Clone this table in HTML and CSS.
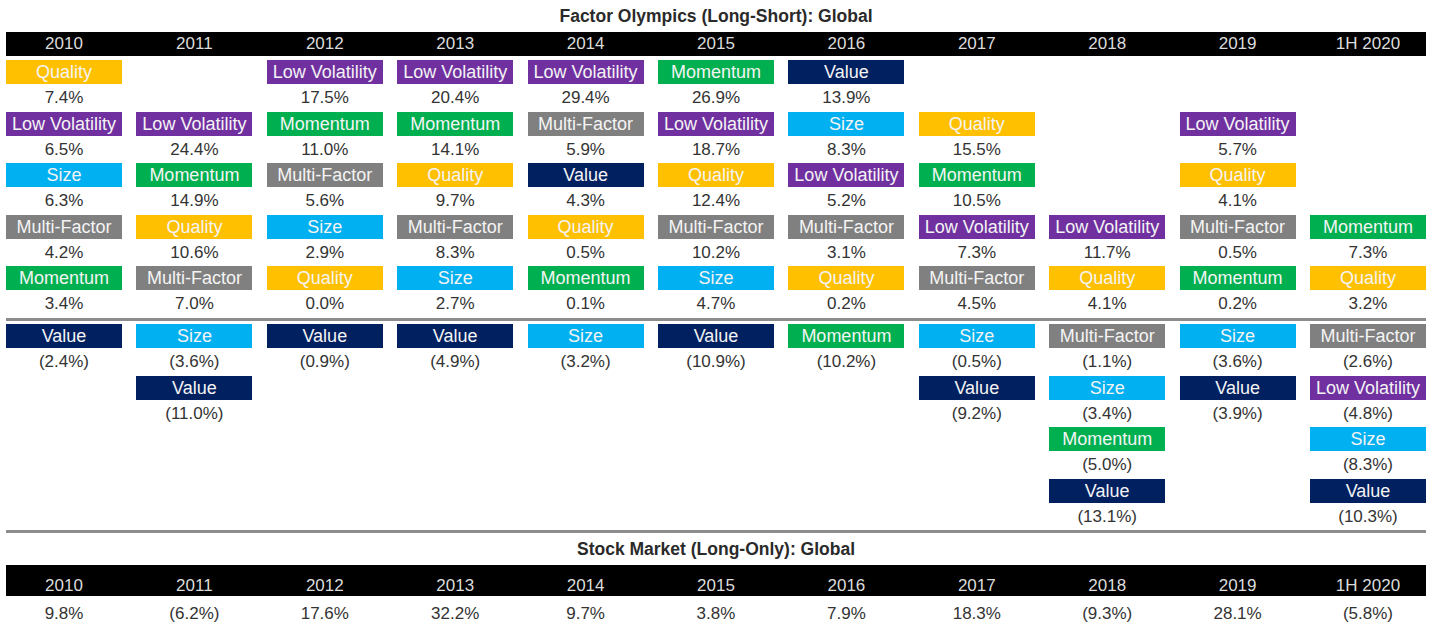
FILE: index.html
```html
<!DOCTYPE html>
<html lang="en">
<head>
<meta charset="utf-8">
<title>Factor Olympics</title>
<link rel="stylesheet" href="styles.css">
</head>
<body>
<div class="page">
  <h1 class="title">Factor Olympics (Long-Short): Global</h1>
  <div class="grid yearbar">
    <div>2010</div><div>2011</div><div>2012</div><div>2013</div><div>2014</div><div>2015</div><div>2016</div><div>2017</div><div>2018</div><div>2019</div><div>1H 2020</div>
  </div>

  <div class="grid pos">
    <div class="col">
      <div class="lbl q">Quality</div><div class="pct">7.4%</div>
      <div class="lbl lv">Low Volatility</div><div class="pct">6.5%</div>
      <div class="lbl sz">Size</div><div class="pct">6.3%</div>
      <div class="lbl mf">Multi-Factor</div><div class="pct">4.2%</div>
      <div class="lbl mo">Momentum</div><div class="pct">3.4%</div>
    </div>
    <div class="col">
      <div class="lbl lv">Low Volatility</div><div class="pct">24.4%</div>
      <div class="lbl mo">Momentum</div><div class="pct">14.9%</div>
      <div class="lbl q">Quality</div><div class="pct">10.6%</div>
      <div class="lbl mf">Multi-Factor</div><div class="pct">7.0%</div>
    </div>
    <div class="col">
      <div class="lbl lv">Low Volatility</div><div class="pct">17.5%</div>
      <div class="lbl mo">Momentum</div><div class="pct">11.0%</div>
      <div class="lbl mf">Multi-Factor</div><div class="pct">5.6%</div>
      <div class="lbl sz">Size</div><div class="pct">2.9%</div>
      <div class="lbl q">Quality</div><div class="pct">0.0%</div>
    </div>
    <div class="col">
      <div class="lbl lv">Low Volatility</div><div class="pct">20.4%</div>
      <div class="lbl mo">Momentum</div><div class="pct">14.1%</div>
      <div class="lbl q">Quality</div><div class="pct">9.7%</div>
      <div class="lbl mf">Multi-Factor</div><div class="pct">8.3%</div>
      <div class="lbl sz">Size</div><div class="pct">2.7%</div>
    </div>
    <div class="col">
      <div class="lbl lv">Low Volatility</div><div class="pct">29.4%</div>
      <div class="lbl mf">Multi-Factor</div><div class="pct">5.9%</div>
      <div class="lbl va">Value</div><div class="pct">4.3%</div>
      <div class="lbl q">Quality</div><div class="pct">0.5%</div>
      <div class="lbl mo">Momentum</div><div class="pct">0.1%</div>
    </div>
    <div class="col">
      <div class="lbl mo">Momentum</div><div class="pct">26.9%</div>
      <div class="lbl lv">Low Volatility</div><div class="pct">18.7%</div>
      <div class="lbl q">Quality</div><div class="pct">12.4%</div>
      <div class="lbl mf">Multi-Factor</div><div class="pct">10.2%</div>
      <div class="lbl sz">Size</div><div class="pct">4.7%</div>
    </div>
    <div class="col">
      <div class="lbl va">Value</div><div class="pct">13.9%</div>
      <div class="lbl sz">Size</div><div class="pct">8.3%</div>
      <div class="lbl lv">Low Volatility</div><div class="pct">5.2%</div>
      <div class="lbl mf">Multi-Factor</div><div class="pct">3.1%</div>
      <div class="lbl q">Quality</div><div class="pct">0.2%</div>
    </div>
    <div class="col">
      <div class="lbl q">Quality</div><div class="pct">15.5%</div>
      <div class="lbl mo">Momentum</div><div class="pct">10.5%</div>
      <div class="lbl lv">Low Volatility</div><div class="pct">7.3%</div>
      <div class="lbl mf">Multi-Factor</div><div class="pct">4.5%</div>
    </div>
    <div class="col">
      <div class="lbl lv">Low Volatility</div><div class="pct">11.7%</div>
      <div class="lbl q">Quality</div><div class="pct">4.1%</div>
    </div>
    <div class="col">
      <div class="lbl lv">Low Volatility</div><div class="pct">5.7%</div>
      <div class="lbl q">Quality</div><div class="pct">4.1%</div>
      <div class="lbl mf">Multi-Factor</div><div class="pct">0.5%</div>
      <div class="lbl mo">Momentum</div><div class="pct">0.2%</div>
    </div>
    <div class="col">
      <div class="lbl mo">Momentum</div><div class="pct">7.3%</div>
      <div class="lbl q">Quality</div><div class="pct">3.2%</div>
    </div>
  </div>

  <div class="rule"></div>

  <div class="grid neg">
    <div class="col">
      <div class="lbl va">Value</div><div class="pct">(2.4%)</div>
    </div>
    <div class="col">
      <div class="lbl sz">Size</div><div class="pct">(3.6%)</div>
      <div class="lbl va">Value</div><div class="pct">(11.0%)</div>
    </div>
    <div class="col">
      <div class="lbl va">Value</div><div class="pct">(0.9%)</div>
    </div>
    <div class="col">
      <div class="lbl va">Value</div><div class="pct">(4.9%)</div>
    </div>
    <div class="col">
      <div class="lbl sz">Size</div><div class="pct">(3.2%)</div>
    </div>
    <div class="col">
      <div class="lbl va">Value</div><div class="pct">(10.9%)</div>
    </div>
    <div class="col">
      <div class="lbl mo">Momentum</div><div class="pct">(10.2%)</div>
    </div>
    <div class="col">
      <div class="lbl sz">Size</div><div class="pct">(0.5%)</div>
      <div class="lbl va">Value</div><div class="pct">(9.2%)</div>
    </div>
    <div class="col">
      <div class="lbl mf">Multi-Factor</div><div class="pct">(1.1%)</div>
      <div class="lbl sz">Size</div><div class="pct">(3.4%)</div>
      <div class="lbl mo">Momentum</div><div class="pct">(5.0%)</div>
      <div class="lbl va">Value</div><div class="pct">(13.1%)</div>
    </div>
    <div class="col">
      <div class="lbl sz">Size</div><div class="pct">(3.6%)</div>
      <div class="lbl va">Value</div><div class="pct">(3.9%)</div>
    </div>
    <div class="col">
      <div class="lbl mf">Multi-Factor</div><div class="pct">(2.6%)</div>
      <div class="lbl lv">Low Volatility</div><div class="pct">(4.8%)</div>
      <div class="lbl sz">Size</div><div class="pct">(8.3%)</div>
      <div class="lbl va">Value</div><div class="pct">(10.3%)</div>
    </div>
  </div>

  <div class="rule"></div>

  <h2 class="title">Stock Market (Long-Only): Global</h2>
  <div class="grid yearbar tall">
    <div>2010</div><div>2011</div><div>2012</div><div>2013</div><div>2014</div><div>2015</div><div>2016</div><div>2017</div><div>2018</div><div>2019</div><div>1H 2020</div>
  </div>
  <div class="grid market">
    <div>9.8%</div><div>(6.2%)</div><div>17.6%</div><div>32.2%</div><div>9.7%</div><div>3.8%</div><div>7.9%</div><div>18.3%</div><div>(9.3%)</div><div>28.1%</div><div>(5.8%)</div>
  </div>
</div>
</body>
</html>
```

FILE: styles.css
```css
* { box-sizing: border-box; }

html, body {
  margin: 0;
  padding: 0;
  background: #ffffff;
}

body {
  font-family: "Liberation Sans", Arial, sans-serif;
  color: #333333;
}

.page {
  width: 1420px;
  margin-left: 6px;
}

.title {
  margin: 0;
  height: 32px;
  line-height: 32px;
  font-size: 17.5px;
  font-weight: bold;
  text-align: center;
  color: #2a2a2a;
}

.grid {
  display: grid;
  grid-template-columns: repeat(11, 1fr);
  column-gap: 14.4px;
}

.yearbar {
  background: #000000;
  height: 24px;
  line-height: 24px;
  color: #dcdcdc;
  font-size: 17px;
  font-weight: normal;
  text-align: center;
}

.yearbar.tall {
  height: 31px;
  line-height: 21px;
  padding-top: 10px;
}

.pos {
  height: 261.5px;
}

.pos .col {
  display: flex;
  flex-direction: column;
  justify-content: flex-end;
}

.neg {
  height: 209.5px;
  padding-top: 3.5px;
}

.neg .col {
  display: flex;
  flex-direction: column;
  justify-content: flex-start;
}

.lbl {
  height: 24px;
  line-height: 24px;
  text-align: center;
  color: #f4f4f4;
  font-size: 18px;
  white-space: nowrap;
  overflow: hidden;
}

.pct {
  height: 27.5px;
  line-height: 27.5px;
  text-align: center;
  font-size: 17px;
  color: #333333;
}

.q  { background: #ffc000; }
.lv { background: #7030a0; }
.sz { background: #00b0f0; }
.mf { background: #808080; }
.mo { background: #00b050; }
.va { background: #002060; }

.rule {
  height: 3px;
  background: #8c8c8c;
}

.market {
  height: 36px;
  line-height: 36px;
  text-align: center;
  font-size: 17px;
  color: #333333;
}
```
